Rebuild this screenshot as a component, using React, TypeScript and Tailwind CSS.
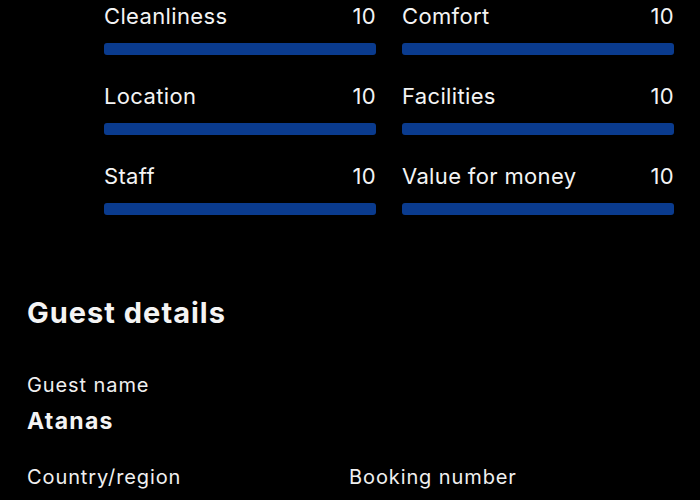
const scores = [
  { name: "Cleanliness", value: 10 },
  { name: "Comfort", value: 10 },
  { name: "Location", value: 10 },
  { name: "Facilities", value: 10 },
  { name: "Staff", value: 10 },
  { name: "Value for money", value: 10 },
];

function ScoreRow({ name, value }: { name: string; value: number }) {
  return (
    <div className="flex flex-col">
      <div className="flex justify-between text-[22px] leading-[32px] tracking-[0.35px] text-[#f4f4f4]">
        <span>{name}</span>
        <span>{value}</span>
      </div>
      <div className="mt-[11px] h-[12px] rounded-[3px] bg-[#0a3b8e]" style={{ width: `${value * 10}%` }}></div>
    </div>
  );
}

export default function App() {
  return (
    <div className="w-[700px] h-[500px] overflow-hidden bg-black text-white font-['Inter',sans-serif]">
      <div className="grid grid-cols-2 gap-x-[26px] gap-y-[25px] pl-[104px] pr-[26px]">
        {scores.map((s) => (
          <ScoreRow key={s.name} name={s.name} value={s.value} />
        ))}
      </div>
      <div className="px-[27px] mt-[80px]">
        <h2 className="text-[29px] leading-[36px] font-bold tracking-[1px] text-[#f4f4f4]">Guest details</h2>
        <div className="mt-[40px]">
          <p className="text-[20px] leading-[28px] tracking-[0.9px] text-[#f0f0f0]">Guest name</p>
          <p className="mt-[7px] text-[23px] leading-[30px] font-bold tracking-[1.3px] text-[#f4f4f4]">Atanas</p>
        </div>
        <div className="mt-[27px] grid grid-cols-[322px_1fr] text-[20px] leading-[28px] tracking-[0.9px] text-[#f0f0f0]">
          <p>Country/region</p>
          <p>Booking number</p>
        </div>
      </div>
    </div>
  );
}
